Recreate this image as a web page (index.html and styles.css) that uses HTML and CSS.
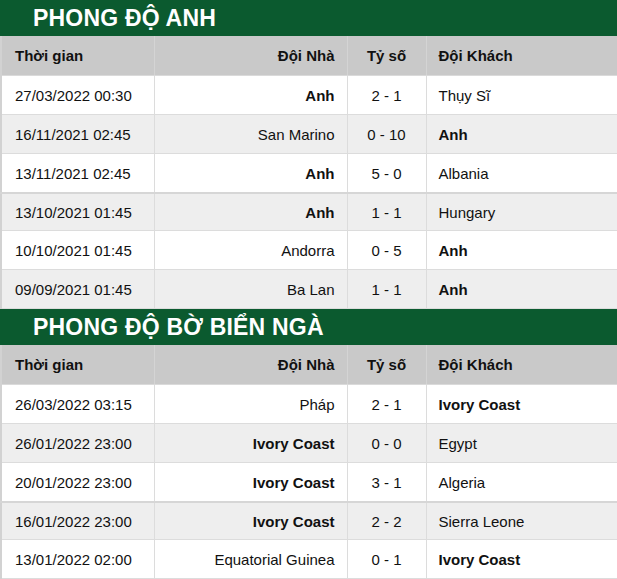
FILE: index.html
```html
<!DOCTYPE html>
<html lang="vi">
<head>
<meta charset="utf-8">
<link rel="stylesheet" href="styles.css">
</head>
<body>
<div class="page">
  <h2 class="title">PHONG ĐỘ ANH</h2>
  <table class="form">
    <colgroup><col class="c1"><col class="c2"><col class="c3"><col class="c4"></colgroup>
    <thead>
      <tr><th class="time">Thời gian</th><th class="home">Đội Nhà</th><th class="score">Tỷ số</th><th class="away">Đội Khách</th></tr>
    </thead>
    <tbody>
      <tr><td class="time">27/03/2022 00:30</td><td class="home"><b>Anh</b></td><td class="score">2 - 1</td><td class="away">Thụy Sĩ</td></tr>
      <tr class="alt"><td class="time">16/11/2021 02:45</td><td class="home">San Marino</td><td class="score">0 - 10</td><td class="away"><b>Anh</b></td></tr>
      <tr><td class="time">13/11/2021 02:45</td><td class="home"><b>Anh</b></td><td class="score">5 - 0</td><td class="away">Albania</td></tr>
      <tr class="alt sep"><td class="time">13/10/2021 01:45</td><td class="home"><b>Anh</b></td><td class="score">1 - 1</td><td class="away">Hungary</td></tr>
      <tr><td class="time">10/10/2021 01:45</td><td class="home">Andorra</td><td class="score">0 - 5</td><td class="away"><b>Anh</b></td></tr>
      <tr class="alt"><td class="time">09/09/2021 01:45</td><td class="home">Ba Lan</td><td class="score">1 - 1</td><td class="away"><b>Anh</b></td></tr>
    </tbody>
  </table>
  <h2 class="title">PHONG ĐỘ BỜ BIỂN NGÀ</h2>
  <table class="form">
    <colgroup><col class="c1"><col class="c2"><col class="c3"><col class="c4"></colgroup>
    <thead>
      <tr><th class="time">Thời gian</th><th class="home">Đội Nhà</th><th class="score">Tỷ số</th><th class="away">Đội Khách</th></tr>
    </thead>
    <tbody>
      <tr><td class="time">26/03/2022 03:15</td><td class="home">Pháp</td><td class="score">2 - 1</td><td class="away"><b>Ivory Coast</b></td></tr>
      <tr class="alt"><td class="time">26/01/2022 23:00</td><td class="home"><b>Ivory Coast</b></td><td class="score">0 - 0</td><td class="away">Egypt</td></tr>
      <tr><td class="time">20/01/2022 23:00</td><td class="home"><b>Ivory Coast</b></td><td class="score">3 - 1</td><td class="away">Algeria</td></tr>
      <tr class="alt sep"><td class="time">16/01/2022 23:00</td><td class="home"><b>Ivory Coast</b></td><td class="score">2 - 2</td><td class="away">Sierra Leone</td></tr>
      <tr><td class="time">13/01/2022 02:00</td><td class="home">Equatorial Guinea</td><td class="score">0 - 1</td><td class="away"><b>Ivory Coast</b></td></tr>
    </tbody>
  </table>
</div>
</body>
</html>
```

FILE: styles.css
```css
html, body {
  margin: 0;
  padding: 0;
  background: #ffffff;
}

.page {
  width: 617px;
  font-family: "Liberation Sans", Arial, sans-serif;
  color: #111111;
}

.title {
  margin: 0;
  height: 36px;
  line-height: 37px;
  padding-left: 33px;
  background: #0b5a2f;
  color: #ffffff;
  font-size: 23px;
  font-weight: bold;
  letter-spacing: 0.2px;
}

.form {
  width: 617px;
  border-collapse: collapse;
  table-layout: fixed;
  font-size: 15px;
  border-left: 2px solid #d2d2d2;
}

.c1 { width: 153px; }
.c2 { width: 193px; }
.c3 { width: 79px; }
.c4 { width: auto; }

.form th,
.form td {
  height: 38px;
  padding: 0;
  border: 1px solid #dcdcdc;
  border-top: 0;
  white-space: nowrap;
}

.form th {
  height: 39px;
  background: #c9c9c9;
  font-weight: bold;
  border-color: #d4d4d4;
  border-bottom: 1px solid #dadada;
}

.form tbody tr { background: #ffffff; }
.form tbody tr.alt { background: #eeeeee; }
.form tbody tr.sep td { border-top: 2px solid #d6d6d6; height: 36px; }

.time { text-align: left; padding-left: 13px !important; }
.home { text-align: right; padding-right: 12px !important; }
.score { text-align: center; }
.away { text-align: left; padding-left: 12px !important; border-right: 0 !important; }

.form b { font-weight: bold; color: #111111; }
```
